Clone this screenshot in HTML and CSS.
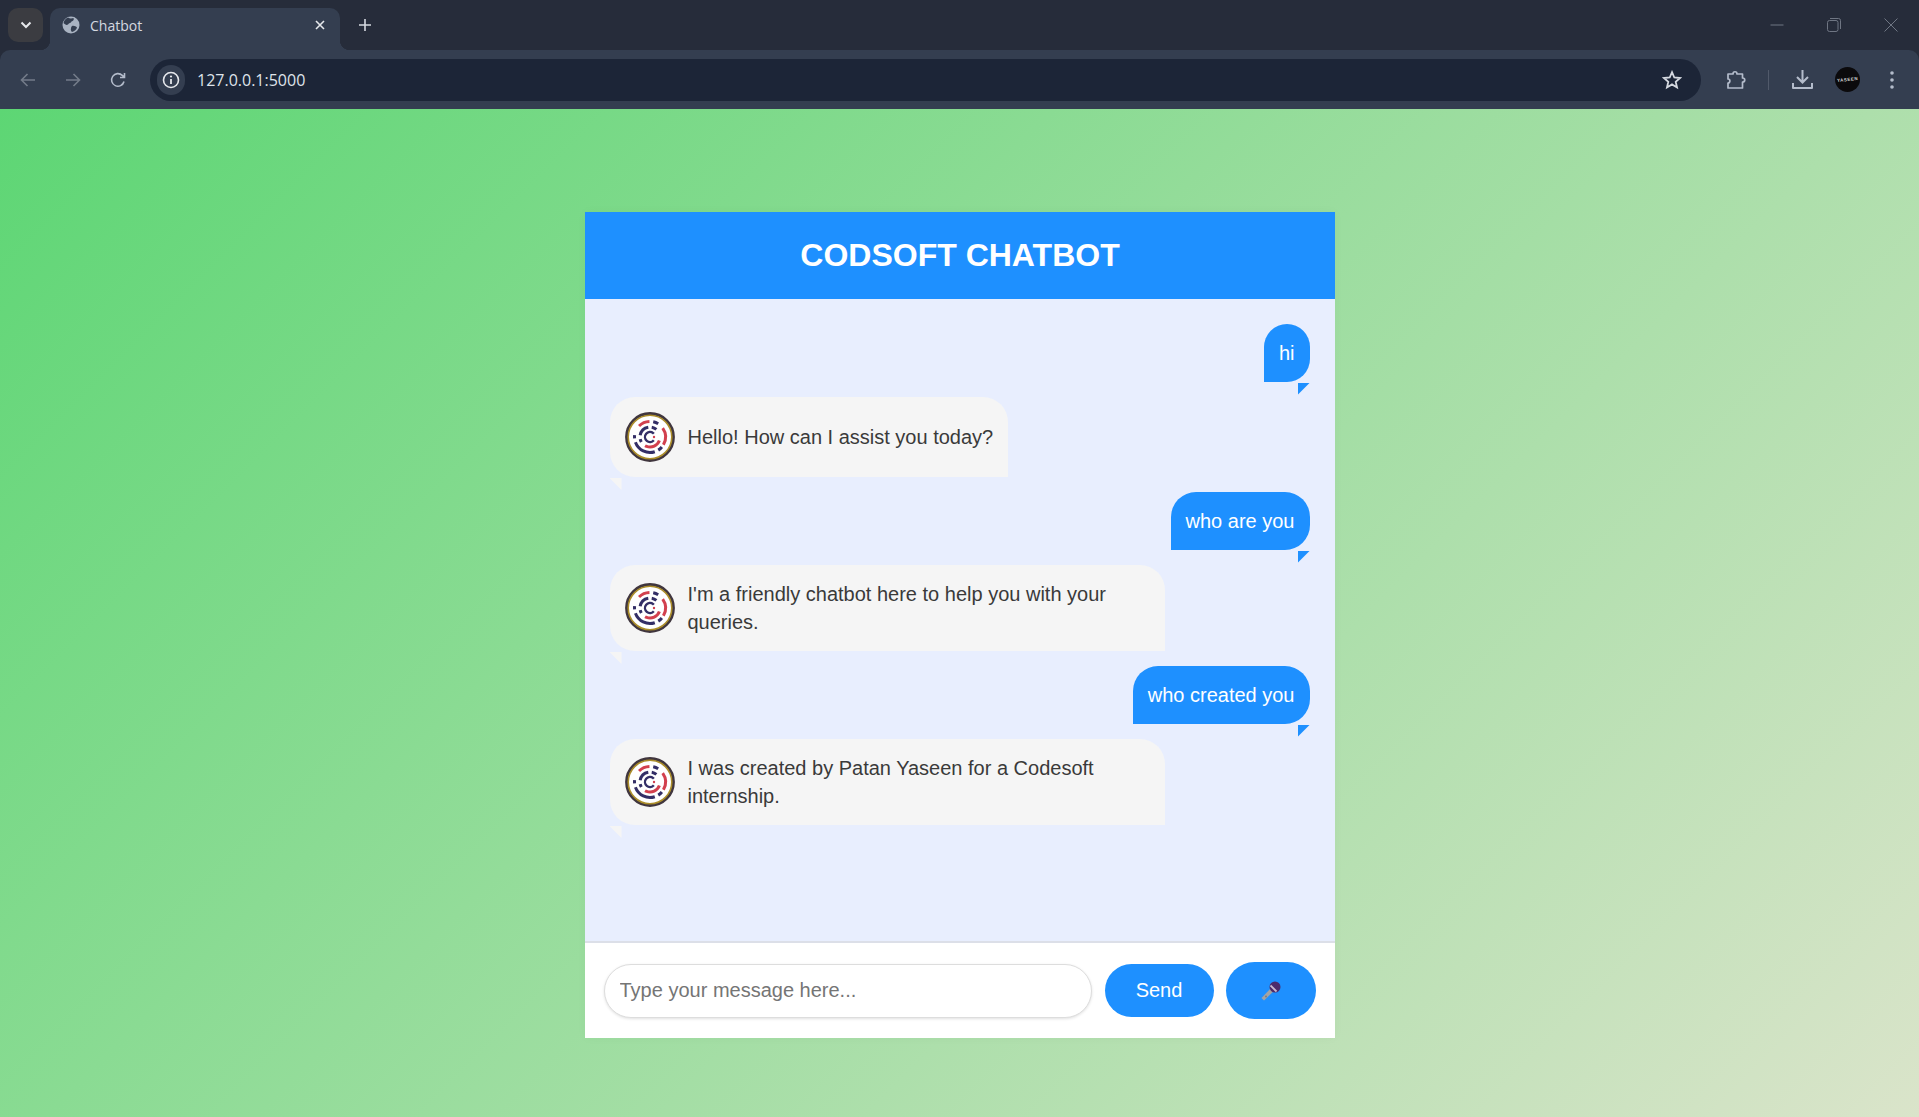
FILE: index.html
```html
<!DOCTYPE html>
<html lang="en">
<head>
	<meta charset="UTF-8">
	<title>Chatbot</title>
	<link rel="stylesheet" href="styles.css">
</head>
<body>
	<svg class="defs" width="0" height="0">
		<symbol id="botLogo" viewBox="0 0 50 50">
			<circle cx="25" cy="25" r="21" fill="#fff"/>
			<circle cx="25" cy="25" r="23.400" fill="none" stroke="#40363e" stroke-width="3"/>
			<circle cx="25" cy="25" r="21.800" fill="none" stroke="#ab8d2a" stroke-width="1.600"/>
			<g fill="none" stroke-width="3">
				<circle cx="25" cy="25" r="15.500" stroke="#d2404e" pathLength="360" stroke-dasharray="43 317" transform="rotate(225 25 25)"/>
				<circle cx="25" cy="25" r="15.500" stroke="#332e66" pathLength="360" stroke-dasharray="20 340" transform="rotate(282 25 25)"/>
				<circle cx="25" cy="25" r="15.500" stroke="#d2404e" pathLength="360" stroke-dasharray="65 295" transform="rotate(325 25 25)"/>
				<circle cx="25" cy="25" r="15.500" stroke="#332e66" pathLength="360" stroke-dasharray="18 342" transform="rotate(40 25 25)"/>
				<circle cx="25" cy="25" r="15.500" stroke="#332e66" pathLength="360" stroke-dasharray="88 272" transform="rotate(72 25 25)"/>
				<circle cx="25" cy="25" r="15.500" stroke="#332e66" pathLength="360" stroke-dasharray="12 348" transform="rotate(175 25 25)"/>
				<circle cx="25" cy="25" r="10" stroke="#332e66" pathLength="360" stroke-dasharray="70 290" transform="rotate(190 25 25)"/>
				<circle cx="25" cy="25" r="10" stroke="#332e66" pathLength="360" stroke-dasharray="30 330" transform="rotate(280 25 25)"/>
				<circle cx="25" cy="25" r="10" stroke="#d2404e" pathLength="360" stroke-dasharray="100 260" transform="rotate(20 25 25)"/>
				<circle cx="25" cy="25" r="10" stroke="#332e66" pathLength="360" stroke-dasharray="18 342" transform="rotate(150 25 25)"/>
				<circle cx="25" cy="25" r="5" stroke="#332e66" stroke-width="2.400" pathLength="360" stroke-dasharray="280 80" transform="rotate(40 25 25)"/>
			</g>
			<circle cx="29" cy="25" r="1.200" fill="#d2404e"/>
		</symbol>
	</svg>

	<div class="browser">
		<div class="browser__tabs">
			<div class="browser__tabSearch">
				<svg width="12" height="8" viewBox="0 0 12 8"><path d="M1.500 1.500 6 6l4.500-4.500" fill="none" stroke="#e6e8ec" stroke-width="2"/></svg>
			</div>
			<div class="browser__tab">
				<svg class="browser__favicon" width="18" height="18" viewBox="0 0 18 18">
					<circle cx="9" cy="9" r="8.500" fill="#a9b3c2"/>
					<path d="M6 1.500c2 1.500 4 1 5.500.5 1 2-.5 3-2 3.500-.5 1.500-2.500 1.500-3.500 3C4.500 9.500 3 8.500 1.500 7 2 4.500 3.500 2.500 6 1.500zM10 10c2-.5 4 .5 5 1.500-.5 2-2.500 4-5 4.500-1-1-1.500-2.500-1-3.500 0-1 .5-2 1-2.500z" fill="#343e50"/>
				</svg>
				<span class="browser__tabTitle">Chatbot</span>
				<svg class="browser__tabClose" width="10" height="10" viewBox="0 0 10 10"><path d="M1 1l8 8M9 1 1 9" stroke="#e6e8ec" stroke-width="1.600"/></svg>
			</div>
			<svg class="browser__newTab" width="14" height="14" viewBox="0 0 14 14"><path d="M7 1v12M1 7h12" stroke="#d5d9e0" stroke-width="1.600"/></svg>
			<div class="browser__window">
				<svg width="14" height="14" viewBox="0 0 14 14"><path d="M0.500 7h13" stroke="#6f7683"/></svg>
				<svg width="14" height="14" viewBox="0 0 14 14"><rect x="0.500" y="2.500" width="10.500" height="11" rx="2" fill="none" stroke="#6f7683"/><path d="M3 .5h8.500a2 2 0 0 1 2 2V11" fill="none" stroke="#6f7683"/></svg>
				<svg width="14" height="14" viewBox="0 0 14 14"><path d="M.5.5l13 13M13.500.5l-13 13" stroke="#6f7683"/></svg>
			</div>
		</div>
		<div class="browser__toolbar">
			<svg class="browser__nav" width="16" height="14" viewBox="0 0 16 14"><path d="M15 7H2M7.500 1 1.500 7l6 6" fill="none" stroke="#737b89" stroke-width="1.600"/></svg>
			<svg class="browser__nav" width="16" height="14" viewBox="0 0 16 14"><path d="M1 7h13M8.500 1l6 6-6 6" fill="none" stroke="#737b89" stroke-width="1.600"/></svg>
			<svg class="browser__nav" width="16" height="16" viewBox="0 0 16 16"><path d="M14 9.500A6.300 6.300 0 1 1 12.300 3.400L14.500 5.500M14.500 1v4.500H10" fill="none" stroke="#b4bccb" stroke-width="1.600"/></svg>
			<div class="browser__omnibox">
				<div class="browser__info">
					<svg width="18" height="18" viewBox="0 0 18 18"><circle cx="9" cy="9" r="7.500" fill="none" stroke="#e6e8ec" stroke-width="1.600"/><path d="M9 8v5" stroke="#e6e8ec" stroke-width="1.800"/><circle cx="9" cy="5.500" r="1.100" fill="#e6e8ec"/></svg>
				</div>
				<span class="browser__url">127.0.0.1:5000</span>
				<svg class="browser__star" width="20" height="20" viewBox="0 0 20 20"><path d="M10 2.200l2.300 5.300 5.700.5-4.300 3.800 1.300 5.600-5-3-5 3 1.300-5.600L2 8l5.700-.5z" fill="none" stroke="#d5d9e0" stroke-width="1.800"/></svg>
			</div>
			<svg class="browser__ext" width="21" height="20" viewBox="0 0 21 20"><path d="M2 4h5c0-3 4-3 4 0h5.500v4c3 0 3 4 0 4V18H2v-5c2.500 0 2.500-4 0-4z" fill="none" stroke="#b4bccb" stroke-width="1.700" stroke-linejoin="round"/></svg>
			<span class="browser__divider"></span>
			<svg class="browser__download" width="21" height="21" viewBox="0 0 21 21"><path d="M10.500 1v12M5 8l5.500 5.500L16 8" fill="none" stroke="#b4bccb" stroke-width="2"/><path d="M1 14v5h19v-5" fill="none" stroke="#b4bccb" stroke-width="2" stroke-linejoin="round"/></svg>
			<div class="browser__avatar"><span>YASEEN</span></div>
			<svg class="browser__menu" width="4" height="18" viewBox="0 0 4 18"><circle cx="2" cy="2" r="1.800" fill="#b4bccb"/><circle cx="2" cy="9" r="1.800" fill="#b4bccb"/><circle cx="2" cy="16" r="1.800" fill="#b4bccb"/></svg>
		</div>
	</div>

	<div class="page">
		<div class="chat">
			<div class="chat__header">CODSOFT CHATBOT</div>
			<div class="chat__messages">
				<div class="chat__message chat__message--user">hi</div>
				<div class="chat__message chat__message--bot">
					<svg class="chat__logo"><use href="#botLogo"/></svg>
					<span>Hello! How can I assist you today?</span>
				</div>
				<div class="chat__message chat__message--user">who are you</div>
				<div class="chat__message chat__message--bot">
					<svg class="chat__logo"><use href="#botLogo"/></svg>
					<span>I'm a friendly chatbot here to help you with your queries.</span>
				</div>
				<div class="chat__message chat__message--user">who created you</div>
				<div class="chat__message chat__message--bot">
					<svg class="chat__logo"><use href="#botLogo"/></svg>
					<span>I was created by Patan Yaseen for a Codesoft internship.</span>
				</div>
			</div>
			<div class="chat__form">
				<input class="chat__input" type="text" placeholder="Type your message here...">
				<button class="chat__send">Send</button>
				<button class="chat__mic">
					<svg width="20" height="20" viewBox="0 0 20 20">
						<path d="M11 6 14 9 3 19.500 .5 17z" fill="#a3a3a3"/>
						<circle cx="5" cy="15.500" r="1" fill="#7d7d7d"/>
						<circle cx="14" cy="6" r="5.500" fill="#4d2a6b"/>
						<path d="M9.500 4.500l6 6" stroke="#c9b8cf" stroke-width="1.800"/>
					</svg>
				</button>
			</div>
		</div>
	</div>
</body>
</html>
```

FILE: styles.css
```css
* {
	box-sizing: border-box;
}
html, body {
	height: 100%;
}
body {
	margin: 0;
	display: flex;
	flex-direction: column;
	overflow: hidden;
	font-family: "Liberation Sans", Arial, sans-serif;
}
.defs {
	position: absolute;
}

/* browser chrome */
.browser {
	flex: none;
	background-color: #262c3a;
}
.browser__tabs {
	height: 50px;
	display: flex;
	align-items: flex-end;
	padding-left: 8px;
}
.browser__tabSearch {
	width: 35px;
	height: 34px;
	margin-bottom: 8px;
	border-radius: 10px;
	background-color: #3b3c41;
	display: flex;
	align-items: center;
	justify-content: center;
}
.browser__tab {
	position: relative;
	width: 290px;
	height: 42px;
	margin-left: 7px;
	padding: 0 15px 8px 12px;
	border-radius: 10px 10px 0 0;
	background-color: #343e50;
	display: flex;
	align-items: center;
	font-family: "Open Sans", sans-serif;
	font-size: 14px;
	color: #d5d9e0;
}
.browser__tab::before,
.browser__tab::after {
	content: "";
	position: absolute;
	bottom: 0;
	width: 10px;
	height: 10px;
}
.browser__tab::before {
	left: -10px;
	background: radial-gradient(circle at 0 0, transparent 10px, #343e50 10.5px);
}
.browser__tab::after {
	right: -10px;
	background: radial-gradient(circle at 100% 0, transparent 10px, #343e50 10.5px);
}
.browser__favicon {
	margin-right: 10px;
}
.browser__tabTitle {
	flex: 1;
}
.browser__newTab {
	margin: 0 0 18px 18px;
}
.browser__window {
	margin-left: auto;
	padding-right: 21px;
	margin-bottom: 18px;
	display: flex;
	gap: 43px;
}
.browser__toolbar {
	height: 59px;
	padding: 0 25px 0 20px;
	border-radius: 10px 10px 0 0;
	background-color: #343e50;
	display: flex;
	align-items: center;
}
.browser__nav {
	flex: none;
	margin-right: 29px;
}
.browser__omnibox {
	flex: 1;
	height: 42px;
	margin-left: -5px;
	padding: 0 19px 0 7px;
	border-radius: 21px;
	background-color: #1c2537;
	display: flex;
	align-items: center;
}
.browser__info {
	width: 28px;
	height: 30px;
	border-radius: 15px;
	background-color: #343e50;
	display: flex;
	align-items: center;
	justify-content: center;
}
.browser__url {
	flex: 1;
	margin-left: 12px;
	font-family: "Open Sans", sans-serif;
	font-size: 16px;
	color: #dfe3ea;
}
.browser__ext {
	margin-left: 25px;
}
.browser__divider {
	width: 1px;
	height: 20px;
	margin-left: 21px;
	background-color: #515a6b;
}
.browser__download {
	margin-left: 23px;
}
.browser__avatar {
	width: 25px;
	height: 25px;
	margin-left: 22px;
	border-radius: 50%;
	background-color: #0b0a0c;
	color: #d8d8d8;
	font-size: 4.5px;
	font-weight: bold;
	letter-spacing: .5px;
	line-height: 25px;
	text-align: center;
	overflow: hidden;
}
.browser__avatar span {
	display: inline-block;
	transform: rotate(-6deg);
}
.browser__menu {
	margin-left: 30px;
}

/* page */
.page {
	flex: 1;
	padding-top: 103px;
	background: linear-gradient(135deg, #5dd674, #dae4ca);
}
.chat {
	width: 750px;
	height: 826px;
	margin: 0 auto;
	background-color: #fff;
	display: flex;
	flex-direction: column;
	box-shadow: 0 0 10px rgba(0, 0, 0, .03);
}
.chat__header {
	height: 87px;
	padding-left: 1px;
	background-color: #1e90ff;
	color: #fff;
	font-size: 32px;
	font-weight: bold;
	line-height: 87px;
	text-align: center;
}
.chat__messages {
	flex: 1;
	padding: 25px;
	background-color: #e8eefe;
	border-bottom: 2px solid #dcdfe8;
	display: flex;
	flex-direction: column;
	align-items: flex-start;
	gap: 15px;
}
.chat__message {
	position: relative;
	padding: 15px;
	font-size: 20px;
	line-height: 28px;
}
.chat__message::after {
	content: "";
	position: absolute;
	top: calc(100% + 1px);
	width: 12px;
	height: 12px;
}
.chat__message--user {
	align-self: flex-end;
	border-radius: 25px 25px 25px 0;
	background-color: #1e90ff;
	color: #fff;
}
.chat__message--user::after {
	right: 0;
	background-color: #1e90ff;
	clip-path: polygon(0 0, 100% 0, 0 100%);
}
.chat__message--bot {
	max-width: 555px;
	border-radius: 25px 25px 0 25px;
	background-color: #f5f5f5;
	color: #3a3a3a;
	display: flex;
	align-items: center;
	gap: 13px;
}
.chat__message--bot::after {
	left: 0;
	background-color: #f5f5f5;
	clip-path: polygon(0 0, 100% 0, 100% 100%);
}
.chat__logo {
	flex: none;
	width: 50px;
	height: 50px;
}
.chat__form {
	height: 95px;
	padding: 0 19px;
	display: flex;
	align-items: center;
}
.chat__input {
	width: 488px;
	height: 54px;
	padding: 0 15px;
	border: 1px solid #ddd;
	border-radius: 27px;
	box-shadow: 0 1px 3px rgba(0, 0, 0, .12);
	font-family: inherit;
	font-size: 20px;
	outline: none;
}
.chat__input::placeholder {
	color: #757575;
}
.chat__send,
.chat__mic {
	border: 0;
	background-color: #1e90ff;
	color: #fff;
	font-family: inherit;
	font-size: 20px;
	display: flex;
	align-items: center;
	justify-content: center;
}
.chat__send {
	width: 109px;
	height: 53px;
	margin-left: 13px;
	border-radius: 27px;
}
.chat__mic {
	width: 90px;
	height: 57px;
	margin-left: 12px;
	border-radius: 29px;
}
```
